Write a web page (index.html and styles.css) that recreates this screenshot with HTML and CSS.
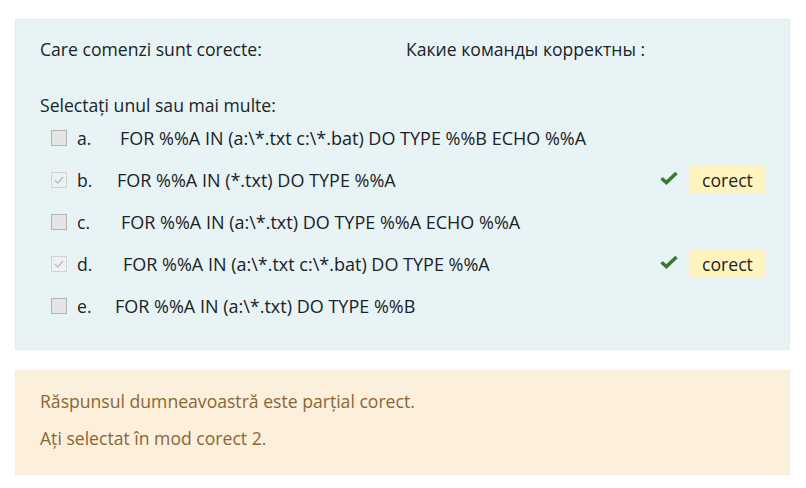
FILE: index.html
```html
<!DOCTYPE html>
<html lang="ro">
<head>
<meta charset="utf-8">
<title>Quiz</title>
<link rel="stylesheet" href="styles.css">
</head>
<body>
<div class="formulation">
  <div class="qtext"><span class="qt-ro">Care comenzi sunt corecte:</span><span class="qt-ru">Какие команды корректны :</span></div>
  <div class="prompt">Selectați unul sau mai multe:</div>
  <div class="answers">
    <div class="opt">
      <span class="cb"></span><span class="num">a.</span><span class="txt t120">FOR %%A IN (a:\*.txt c:\*.bat) DO TYPE %%B ECHO %%A</span>
    </div>
    <div class="opt">
      <span class="cb checked"><svg viewBox="0 0 16 16" width="16" height="16"><path d="M4 8.2 L6.8 11 L12 5" fill="none" stroke="#b9bfc0" stroke-width="1.4"/></svg></span><span class="num">b.</span><span class="txt t117">FOR %%A IN (*.txt) DO TYPE %%A</span>
      <span class="mark"><svg viewBox="0 0 18 14" width="18" height="14"><path d="M1.5 7.2 L6.4 11.6 L16.5 2" fill="none" stroke="#357a32" stroke-width="3.4" stroke-linejoin="miter"/></svg></span><span class="badge">corect</span>
    </div>
    <div class="opt">
      <span class="cb"></span><span class="num">c.</span><span class="txt t121">FOR %%A IN (a:\*.txt) DO TYPE %%A ECHO %%A</span>
    </div>
    <div class="opt">
      <span class="cb checked"><svg viewBox="0 0 16 16" width="16" height="16"><path d="M4 8.2 L6.8 11 L12 5" fill="none" stroke="#b9bfc0" stroke-width="1.4"/></svg></span><span class="num">d.</span><span class="txt t123">FOR %%A IN (a:\*.txt c:\*.bat) DO TYPE %%A</span>
      <span class="mark"><svg viewBox="0 0 18 14" width="18" height="14"><path d="M1.5 7.2 L6.4 11.6 L16.5 2" fill="none" stroke="#357a32" stroke-width="3.4" stroke-linejoin="miter"/></svg></span><span class="badge">corect</span>
    </div>
    <div class="opt">
      <span class="cb"></span><span class="num">e.</span><span class="txt t115">FOR %%A IN (a:\*.txt) DO TYPE %%B</span>
    </div>
  </div>
</div>
<div class="outcome">
  <p class="fb">Răspunsul dumneavoastră este parțial corect.</p>
  <p class="fb">Ați selectat în mod corect 2.</p>
</div>
</body>
</html>
```

FILE: styles.css
```css
html, body {
  margin: 0;
  padding: 0;
  background: #ffffff;
}
body {
  font-family: "Open Sans", "Noto Sans", sans-serif;
  font-size: 17.6px;
  line-height: 24px;
  color: #1a2326;
  padding-top: 19px;
}
.formulation {
  margin: 0 16px 0 15px;
  padding: 17px 23px 22px 24px;
  background: #e7f3f5;
  border: 1px solid #dcedf0;
  box-sizing: border-box;
}
.qtext {
  display: flex;
}
.qt-ro {
  width: 366px;
}
.prompt {
  margin-top: 32px;
}
.answers {
  margin-top: 0;
}
.opt {
  display: flex;
  align-items: center;
  height: 42px;
  padding-left: 11px;
}
.cb {
  width: 16px;
  height: 16px;
  box-sizing: border-box;
  border: 1px solid #b4b4b4;
  background: #e4e4e4;
  flex: none;
  display: flex;
}
.cb.checked {
  border-color: #d0d4d5;
  background: #eef1f2;
}
.cb.checked svg {
  margin: -1px;
}
.num {
  margin-left: 10px;
  width: 13px;
  flex: none;
}
.txt {
  font-size: 18px;
  white-space: nowrap;
}
.t115 { margin-left: 25px; }
.t117 { margin-left: 27px; }
.t120 { margin-left: 30px; }
.t121 { margin-left: 31px; }
.t123 { margin-left: 33px; }
.mark {
  margin-left: auto;
  width: 18px;
  height: 14px;
  display: flex;
  margin-top: -4px;
}
.badge {
  margin-left: 11px;
  width: 77px;
  height: 28px;
  line-height: 28px;
  background: #fff3bf;
  text-align: center;
}
.outcome {
  margin: 20px 16px 0 15px;
  padding: 18px 25px 11px 24px;
  background: #fcefdc;
  color: #8a6633;
  border: 1px solid #fbe9d0;
}
.fb {
  margin: 0 0 13px 0;
}
```
